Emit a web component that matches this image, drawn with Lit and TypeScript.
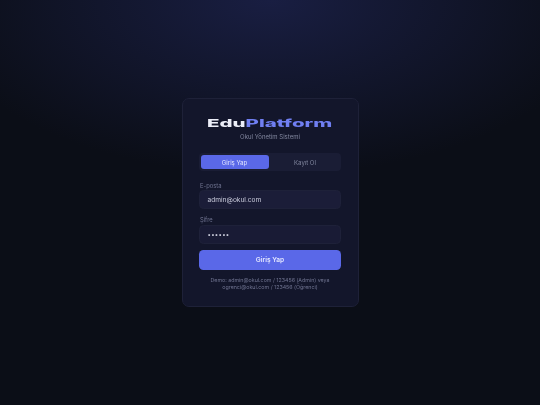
import { LitElement, html, css } from "lit";
import { customElement } from "lit/decorators.js";

@customElement("app-root")
export class AppRoot extends LitElement {
  static styles = css`
    :host {
      display: flex;
      width: 540px;
      height: 405px;
      box-sizing: border-box;
      align-items: center;
      justify-content: center;
      overflow: hidden;
      background: radial-gradient(ellipse 340px 175px at 50% 0%, #191e42 0%, #0b0e17 100%);
      font-family: "Inter", "Liberation Sans", sans-serif;
    }
    .card {
      width: 177px;
      height: 208.5px;
      box-sizing: border-box;
      padding: 16.5px 16.5px 0;
      background: #13162b;
      border: 0.5px solid #1e2138;
      border-radius: 7px;
      display: flex;
      flex-direction: column;
      filter: blur(0.35px);
    }
    .logo {
      height: 14px;
      display: flex;
      justify-content: center;
      align-items: center;
      font-weight: 800;
      font-size: 11px;
      line-height: 14px;
      white-space: nowrap;
    }
    .wide {
      display: inline-block;
      transform: scaleX(1.86);
    }
    .edu { color: #eceef8; }
    .plat { color: #707ff2; }
    .sub {
      margin-top: 2.5px;
      text-align: center;
      font-size: 6px;
      line-height: 9px;
      color: #82879f;
    }
    .tabs {
      margin-top: 12px;
      height: 18px;
      box-sizing: border-box;
      padding: 2px 1.5px;
      background: #1a1d35;
      border-radius: 4px;
      display: grid;
      grid-template-columns: 68px 1fr;
      gap: 2px;
    }
    .tab {
      display: flex;
      align-items: center;
      justify-content: center;
      font-size: 6px;
      color: #82879f;
      border-radius: 3px;
    }
    .tab.on {
      background: #5a68e8;
      color: #e4e7ff;
    }
    label {
      display: block;
      margin-top: 9.5px;
      padding-left: 1px;
      font-size: 5.8px;
      line-height: 9px;
      color: #6f7390;
    }
    .input {
      margin-top: 0.5px;
      height: 19px;
      box-sizing: border-box;
      padding: 0 7.5px;
      background: #1b1d38;
      border: 0.5px solid #1e2139;
      border-radius: 4.5px;
      display: flex;
      align-items: center;
      font-size: 6.6px;
      color: #c9cbdc;
    }
    .input.pw {
      background: #191b35;
      color: #dfe1ee;
      font-size: 6px;
      letter-spacing: 0.3px;
    }
    label.second { margin-top: 6px; }
    .btn {
      margin-top: 6px;
      height: 20px;
      display: flex;
      align-items: center;
      justify-content: center;
      background: #5a68e8;
      border-radius: 4.5px;
      color: #e4e7ff;
      font-size: 6.6px;
      font-weight: 600;
    }
    .demo {
      margin-top: 7px;
      text-align: center;
      font-size: 5.3px;
      line-height: 7px;
      color: #6f7390;
    }
  `;

  render() {
    return html`
      <div class="card">
        <div class="logo"><span class="wide"><span class="edu">Edu</span><span class="plat">Platform</span></span></div>
        <div class="sub">Okul Yönetim Sistemi</div>
        <div class="tabs">
          <div class="tab on">Giriş Yap</div>
          <div class="tab">Kayıt Ol</div>
        </div>
        <label>E-posta</label>
        <div class="input">admin@okul.com</div>
        <label class="second">Şifre</label>
        <div class="input pw">••••••</div>
        <div class="btn">Giriş Yap</div>
        <div class="demo">Demo: admin@okul.com / 123456 (Admin) veya<br />ogrenci@okul.com / 123456 (Öğrenci)</div>
      </div>
    `;
  }
}
